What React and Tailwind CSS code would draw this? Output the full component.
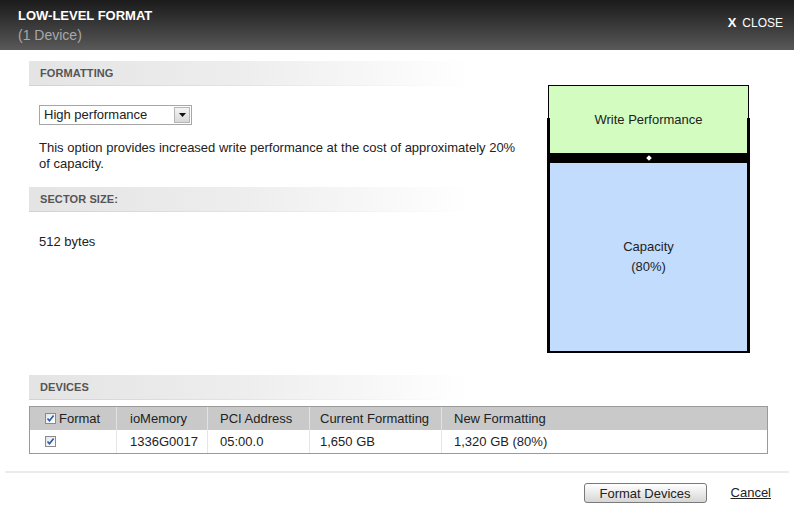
import React from 'react'

const FONT = { fontFamily: '"Liberation Sans", Arial, sans-serif' }

function SectionBar({ children }) {
  return (
    <div className="w-[440px]">
      <div className="h-[24px] flex items-center pl-[11px] bg-linear-to-r from-[#e4e4e4] via-[#eeeeee] to-white text-[11px] font-bold text-[#555] tracking-[0.1px]">
        {children}
      </div>
      <div className="h-px bg-linear-to-r from-[#d2d2d2] via-[#e4e4e4] to-white" />
    </div>
  )
}

function Check() {
  return (
    <span className="inline-flex w-[11px] h-[11px] border border-[#8a8a8a] bg-linear-to-br from-[#e6e6e6] to-white items-center justify-center">
      <svg width="9" height="9" viewBox="0 0 9 9">
        <path d="M1.5 4.5 L3.5 6.8 L7.6 1.6" fill="none" stroke="#2a5aa8" strokeWidth="1.6" />
      </svg>
    </span>
  )
}

const COLS = [
  { label: 'Format', w: 'w-[86px]', pl: 'pl-[15px]' },
  { label: 'ioMemory', w: 'w-[91px]', pl: 'pl-[13px]' },
  { label: 'PCI Address', w: 'w-[102px]', pl: 'pl-[12px]' },
  { label: 'Current Formatting', w: 'w-[132px]', pl: 'pl-[10px]' },
  { label: 'New Formatting', w: 'flex-1', pl: 'pl-[12px]' },
]

const ROW = ['', '1336G0017', '05:00.0', '1,650 GB', '1,320 GB (80%)']

export default function App() {
  return (
    <div className="w-[794px] h-[511px] bg-white text-[#222] overflow-hidden" style={FONT}>
      {/* Header */}
      <div className="h-[50px] bg-linear-to-b from-[#1b1b1b] to-[#595959] flex justify-between pl-[18px] pr-[11px] pt-[8px]">
        <div>
          <div className="text-[13px] leading-[16px] font-bold text-white">LOW-LEVEL FORMAT</div>
          <div className="text-[14px] leading-[18px] text-[#a8a8a8] mt-[2px]">(1 Device)</div>
        </div>
        <div className="flex items-center gap-[6px] h-[30px] text-[12px] text-white">
          <span className="font-bold text-[13px]">X</span>
          <span>CLOSE</span>
        </div>
      </div>

      {/* Body */}
      <div className="pl-[29px] pr-[26px] pt-[11px]">
        <div className="flex h-[314px]">
          <div className="w-[491px]">
            <SectionBar>FORMATTING</SectionBar>
            <div className="pl-[10px] mt-[19px]">
              <div className="w-[153px] h-[20px] border border-[#a6a6a6] flex items-center justify-between pl-[4px] pr-[1px]">
                <span className="text-[13px]">High performance</span>
                <span className="w-[16px] h-[16px] border border-[#b5b5b5] bg-linear-to-b from-[#f4f4f4] to-[#d8d8d8] flex items-center justify-center">
                  <svg width="7" height="4" viewBox="0 0 7 4"><path d="M0 0 H7 L3.5 4 Z" fill="#111" /></svg>
                </span>
              </div>
            </div>
            <p className="pl-[10px] mt-[15px] text-[13px] leading-[16px] whitespace-nowrap">
              This option provides increased write performance at the cost of approximately 20%
              <br />
              of capacity.
            </p>
            <div className="mt-[15px]">
              <SectionBar>SECTOR SIZE:</SectionBar>
            </div>
            <div className="pl-[10px] mt-[22px] text-[13px] leading-[16px]">512 bytes</div>
          </div>

          {/* Diagram */}
          <div className="relative w-[203px] h-[268px] ml-[27px] mt-[24px] text-[13px]">
            <div className="h-[68px] mx-px border border-b-0 border-black bg-[#d3fcc1] flex items-center justify-center">
              Write Performance
            </div>
            <div className="h-[10px] bg-black flex items-center justify-center">
              <span className="w-[4px] h-[4px] bg-white rotate-45" />
            </div>
            <div className="h-[190px] bg-[#c1dcfc] border-x-[3px] border-b-2 border-black flex flex-col items-center justify-center leading-[20px]">
              <span>Capacity</span>
              <span>(80%)</span>
            </div>
            <div className="absolute left-0 top-[33px] w-[3px] h-[35px] bg-black" />
            <div className="absolute right-0 top-[33px] w-[3px] h-[35px] bg-black" />
          </div>
        </div>

        {/* Devices */}
        <SectionBar>DEVICES</SectionBar>
        <div className="mt-[6px] w-[739px] border border-[#9a9a9a] text-[13px]">
          <div className="flex h-[23px] bg-[#c9c9c9]">
            {COLS.map((c, i) => (
              <div
                key={c.label}
                className={`${c.w} ${c.pl} flex items-center ${i === 0 ? 'gap-[3px]' : 'border-l border-[#e2e2e2]'}`}
              >
                {i === 0 && <Check />}
                <span>{c.label}</span>
              </div>
            ))}
          </div>
          <div className="flex h-[23px] bg-white">
            {COLS.map((c, i) => (
              <div
                key={c.label}
                className={`${c.w} ${c.pl} flex items-center ${i === 0 ? '' : 'border-l border-[#e6e6e6]'}`}
              >
                {i === 0 ? <Check /> : <span>{ROW[i]}</span>}
              </div>
            ))}
          </div>
        </div>
      </div>

      {/* Footer */}
      <div className="mx-[5px] mt-[17px] h-[2px] bg-[#ececec]" />
      <div className="flex items-center justify-end pr-[23px] mt-[10px]">
        <button className="w-[123px] h-[20px] border border-[#7a7a7a] rounded-[3px] bg-linear-to-b from-white to-[#d6d6d6] text-[13px] text-[#222] leading-none">
          Format Devices
        </button>
        <a className="ml-[24px] text-[13px] text-[#222] underline">Cancel</a>
      </div>
    </div>
  )
}
